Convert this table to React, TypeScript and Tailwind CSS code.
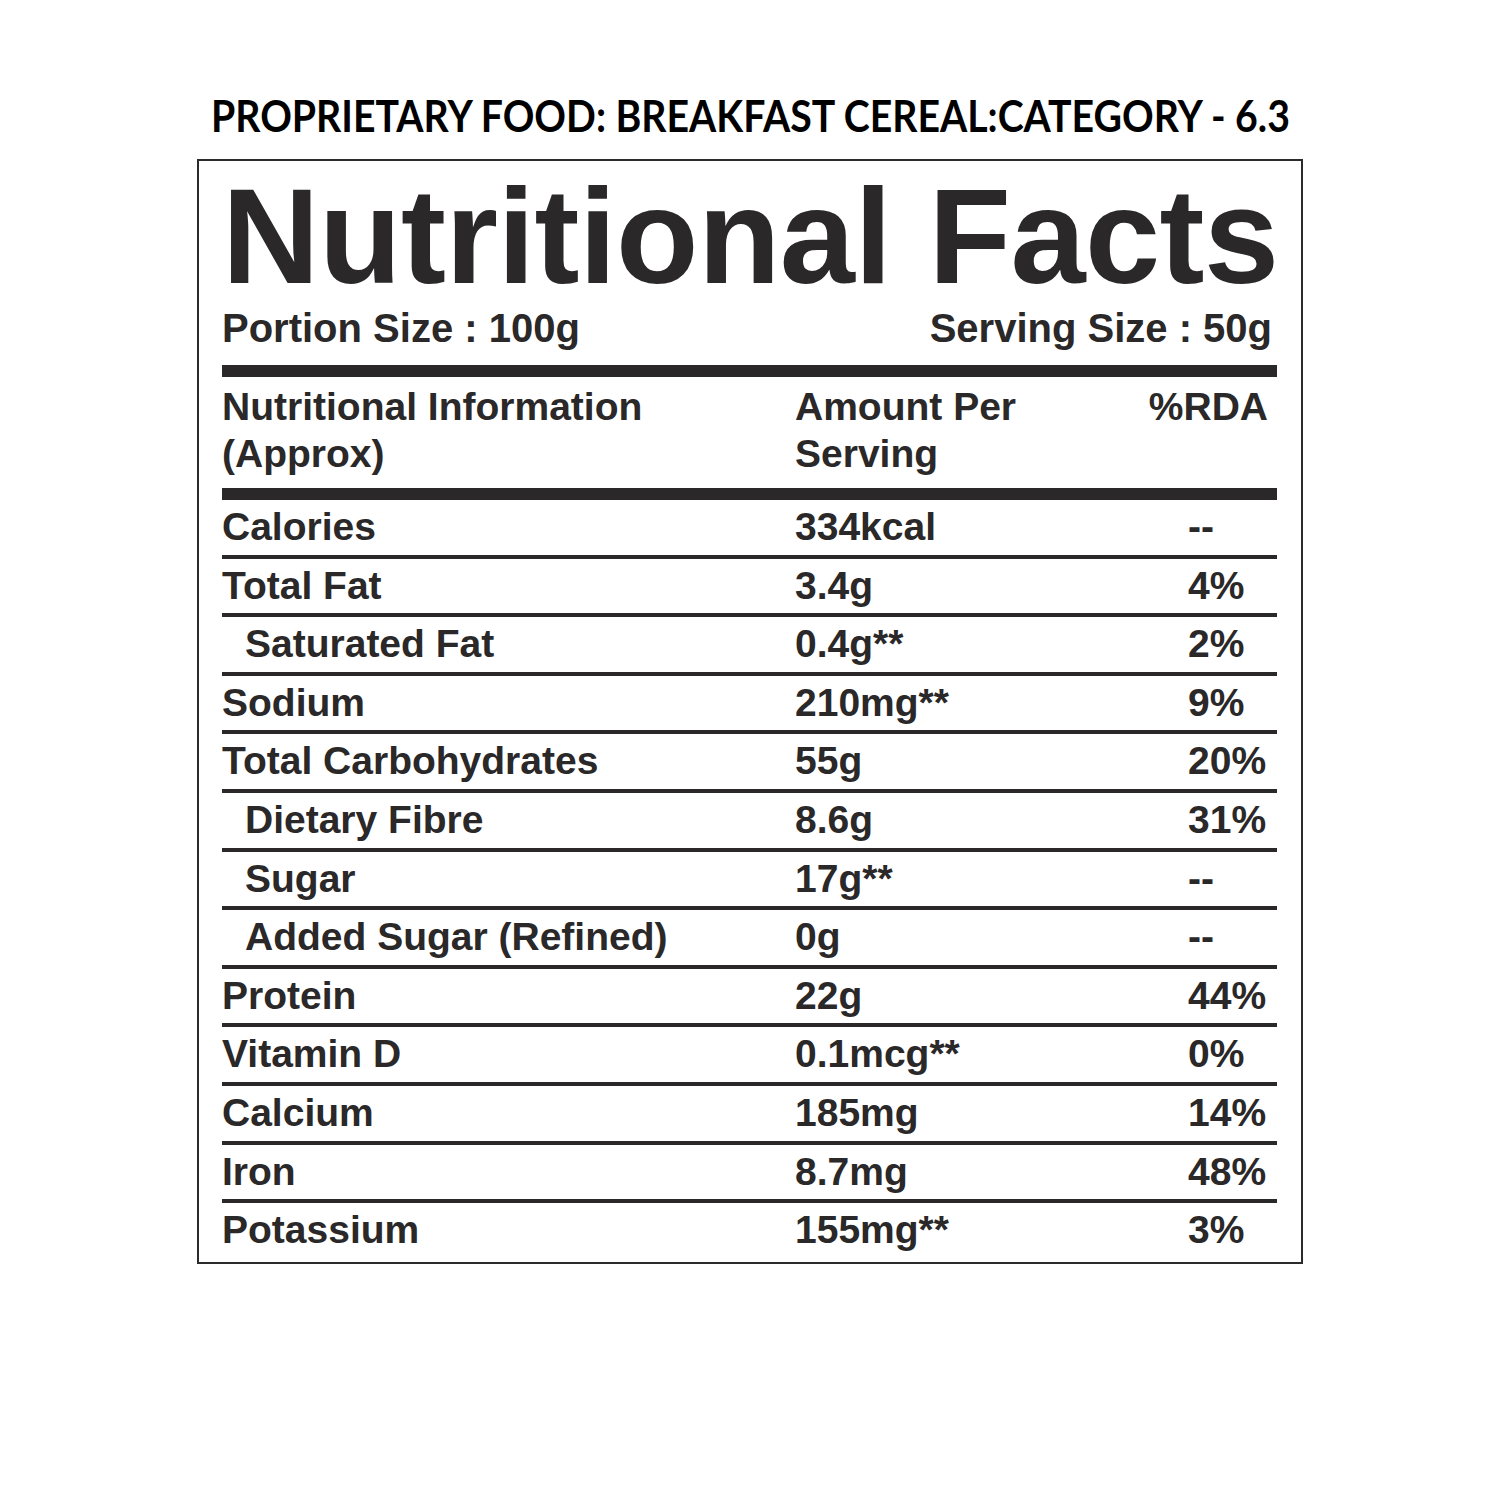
const rows: { name: string; amount: string; rda: string; indent?: boolean }[] = [
  { name: "Calories", amount: "334kcal", rda: "--" },
  { name: "Total Fat", amount: "3.4g", rda: "4%" },
  { name: "Saturated Fat", amount: "0.4g**", rda: "2%", indent: true },
  { name: "Sodium", amount: "210mg**", rda: "9%" },
  { name: "Total Carbohydrates", amount: "55g", rda: "20%" },
  { name: "Dietary Fibre", amount: "8.6g", rda: "31%", indent: true },
  { name: "Sugar", amount: "17g**", rda: "--", indent: true },
  { name: "Added Sugar (Refined)", amount: "0g", rda: "--", indent: true },
  { name: "Protein", amount: "22g", rda: "44%" },
  { name: "Vitamin D", amount: "0.1mcg**", rda: "0%" },
  { name: "Calcium", amount: "185mg", rda: "14%" },
  { name: "Iron", amount: "8.7mg", rda: "48%" },
  { name: "Potassium", amount: "155mg**", rda: "3%" },
];

export default function App() {
  return (
    <div className="w-[1500px] h-[1500px] bg-white flex flex-col items-center">
      {/* ── CATEGORY ── */}
      <h2 className="mt-[86px] h-[60px] font-['Lato',sans-serif] font-bold text-[43px] leading-[60px] text-black whitespace-nowrap scale-x-[0.912]">
        PROPRIETARY FOOD: BREAKFAST CEREAL:CATEGORY - 6.3
      </h2>

      {/* ── LABEL ── */}
      <div className="mt-[13px] w-[1106px] border-2 border-[#2b2b2b] pl-[23px] pr-[24px] pt-[8px] font-['Liberation_Sans',Arial,sans-serif] font-bold text-[#2a2828]">
        <h1 className="text-[135px] leading-[135px] tracking-[-0.5px] whitespace-nowrap">Nutritional Facts</h1>

        <div className="flex justify-between text-[40px] leading-[48px]">
          <span>Portion Size : 100g</span>
          <span className="pr-[5px]">Serving Size : 50g</span>
        </div>

        <div className="mt-[13px] h-[12px] bg-[#2a2828]" />

        <div className="flex text-[39px] leading-[47px] pt-[6px] pb-[11px]">
          <div className="w-[573px]">
            Nutritional Information
            <br />
            (Approx)
          </div>
          <div className="flex-1">
            Amount Per
            <br />
            Serving
          </div>
          <div className="pr-[9px]">%RDA</div>
        </div>

        <div className="h-[12px] bg-[#2a2828]" />

        <div className="flex flex-col">
          {rows.map((row, i) => (
            <div
              key={row.name}
              className={`grid grid-cols-[573px_393px_1fr] h-[58.6px] text-[39px] leading-[54px] ${
                i < rows.length - 1 ? "border-b-4 border-[#2a2828]" : ""
              }`}
            >
              <span className={row.indent ? "pl-[23px]" : ""}>{row.name}</span>
              <span>{row.amount}</span>
              <span>{row.rda}</span>
            </div>
          ))}
        </div>
      </div>
    </div>
  );
}
